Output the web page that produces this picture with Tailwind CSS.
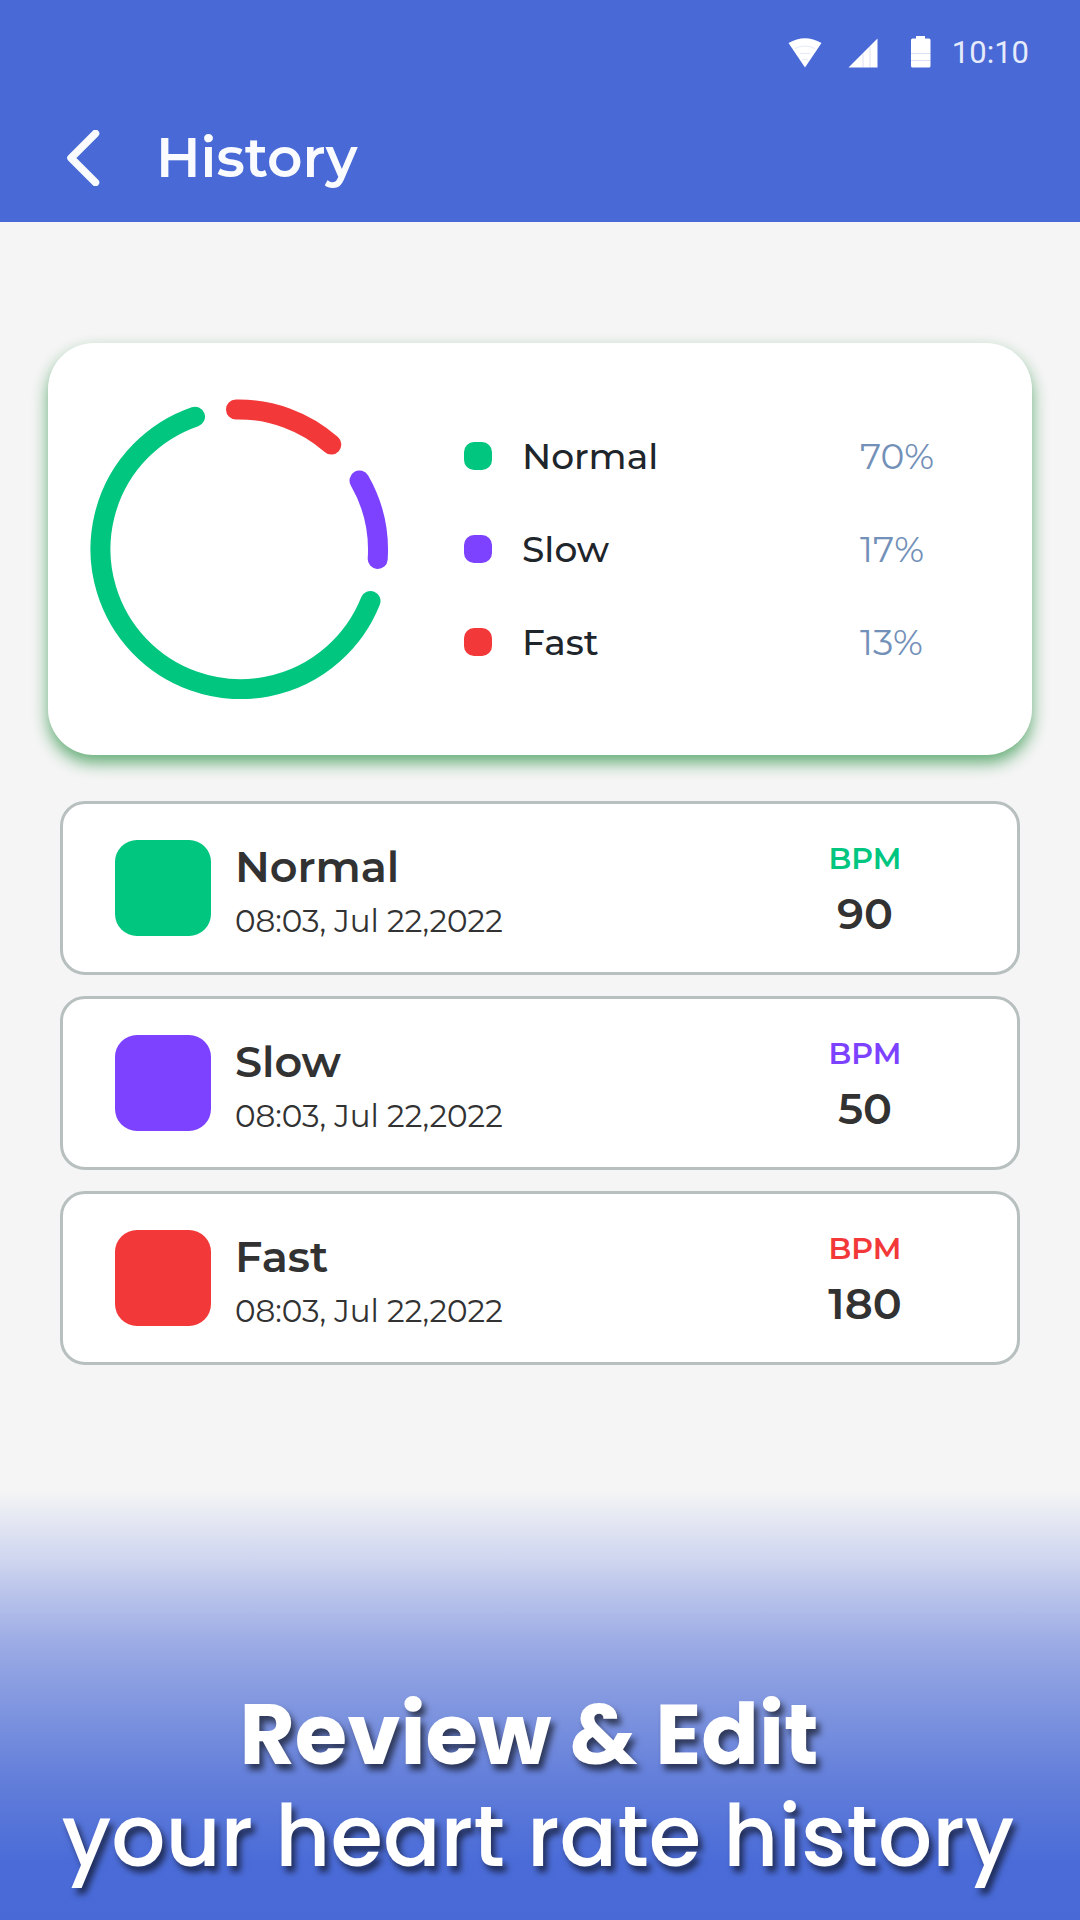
<!DOCTYPE html>
<html lang="en">
<head>
<meta charset="utf-8">
<meta name="viewport" content="width=device-width, initial-scale=1">
<title>History</title>
<script src="https://cdn.jsdelivr.net/npm/@tailwindcss/browser@4"></script>
</head>
<body class="flex min-h-screen flex-col bg-[#f5f5f5] font-['Montserrat','Inter',sans-serif] text-[#323232]">

<header class="bg-[#4869d6] px-[51px] pt-8 pb-9 text-[#fafbfe]">
  <div class="flex h-[42px] items-center justify-end">
    <div class="flex gap-6 text-white">
      <svg class="size-[34px]" viewBox="0 0 34 34" fill="currentColor" aria-label="Wi-Fi"><path d="M0.500 7Q17-2.500 33.500 7L17 31.500z"/><path d="M7 12.500q10-5 20 0M12 17.500h10M14 24q3-1.500 6 0" fill="none" stroke="#4869d6" stroke-opacity=".15"/></svg>
      <svg class="size-[34px]" viewBox="0 0 34 34" fill="currentColor" aria-label="Signal"><path d="M31.500 2.500v29h-29z"/><path d="M17 17.500v14M24 10.500v21" stroke="#4869d6" stroke-opacity=".2"/></svg>
      <svg class="size-[34px]" viewBox="0 0 34 34" fill="currentColor" aria-label="Battery"><path d="M12 2.500V0.500q0-1 1-1h7q1 0 1 1v2h4q1.500 0 1.500 1.500v26q0 1.500-1.500 1.500H8.500Q7 31.500 7 30V4q0-1.500 1.500-1.500z"/><path d="M7 17.500h19.500M7 24.500h19.500" stroke="#4869d6" stroke-opacity=".2"/></svg>
    </div>
    <time class="ml-3.5 font-[Roboto] text-[31px] leading-10 text-[#e6ebfb]">10:10</time>
  </div>
  <div class="mt-14 flex h-14 items-center gap-[41px]">
    <button type="button" aria-label="Back" class="h-14 w-[64px] pl-3.5">
      <svg class="h-14 w-9" viewBox="0 0 36 56" fill="none" stroke="currentColor" stroke-width="7.500" stroke-linecap="round" stroke-linejoin="round"><path d="M30.500 3.500L6 28l24.500 24.500"/></svg>
    </button>
    <h1 class="text-[55px] leading-14 font-semibold">History</h1>
  </div>
</header>

<main class="pt-[121px]">
  <section aria-label="Summary" class="mx-12 flex h-[412px] items-center rounded-[46px] bg-white pl-[42px] shadow-[0_8px_16px_#55a569e6]">
    <svg class="size-[300px] shrink-0" viewBox="0 0 300 300" fill="none" stroke-width="20" stroke-linecap="round" role="img" aria-label="70% normal, 17% slow, 13% fast">
      <path stroke="#00c67f" d="M280.500 202A140 140 0 1 1 105 17.700"/>
      <path stroke="#f23838" d="M146 10.500A139.500 139.500 0 0 1 241.300 45.500"/>
      <path stroke="#7d42ff" d="M269.500 81.500A139.500 139.500 0 0 1 287.700 160"/>
    </svg>
    <ul class="ml-[74px] flex grow flex-col gap-[49px] pr-[78px] text-[36px] leading-11">
      <li class="flex items-center"><span class="size-7 rounded-[10px] bg-[#00c67f]"></span><span class="ml-[30px] grow font-medium text-[#1e252b]">Normal</span><span class="w-[94px] text-[#7390b8]">70%</span></li>
      <li class="flex items-center"><span class="size-7 rounded-[10px] bg-[#7d42ff]"></span><span class="ml-[30px] grow font-medium text-[#1e252b]">Slow</span><span class="w-[94px] text-[#7390b8]">17%</span></li>
      <li class="flex items-center"><span class="size-7 rounded-[10px] bg-[#f23838]"></span><span class="ml-[30px] grow font-medium text-[#1e252b]">Fast</span><span class="w-[94px] text-[#7390b8]">13%</span></li>
    </ul>
  </section>

  <ul class="mx-[60px] mt-[46px] flex flex-col gap-[21px]">
    <li class="flex h-[174px] items-center rounded-[25px] border-3 border-[#b8bfbf] bg-white pl-[52px]">
      <span class="size-24 shrink-0 rounded-[22px] bg-[#00c67f]"></span>
      <div class="ml-6 grow pt-2.5"><h2 class="text-[43px] leading-14 font-semibold">Normal</h2><p class="text-[31px] leading-13">08:03, Jul 22,2022</p></div>
      <div class="mr-[110px] w-[84px] pt-0.5 text-center"><p class="text-[30px] leading-[50px] font-semibold text-[#00c67f]">BPM</p><p class="text-[43px] leading-15 font-semibold">90</p></div>
    </li>
    <li class="flex h-[174px] items-center rounded-[25px] border-3 border-[#b8bfbf] bg-white pl-[52px]">
      <span class="size-24 shrink-0 rounded-[22px] bg-[#7d42ff]"></span>
      <div class="ml-6 grow pt-2.5"><h2 class="text-[43px] leading-14 font-semibold">Slow</h2><p class="text-[31px] leading-13">08:03, Jul 22,2022</p></div>
      <div class="mr-[110px] w-[84px] pt-0.5 text-center"><p class="text-[30px] leading-[50px] font-semibold text-[#7d42ff]">BPM</p><p class="text-[43px] leading-15 font-semibold">50</p></div>
    </li>
    <li class="flex h-[174px] items-center rounded-[25px] border-3 border-[#b8bfbf] bg-white pl-[52px]">
      <span class="size-24 shrink-0 rounded-[22px] bg-[#f23838]"></span>
      <div class="ml-6 grow pt-2.5"><h2 class="text-[43px] leading-14 font-semibold">Fast</h2><p class="text-[31px] leading-13">08:03, Jul 22,2022</p></div>
      <div class="mr-[110px] w-[84px] pt-0.5 text-center"><p class="text-[30px] leading-[50px] font-semibold text-[#f23838]">BPM</p><p class="text-[43px] leading-15 font-semibold">180</p></div>
    </li>
  </ul>
</main>

<footer class="mt-auto bg-[linear-gradient(#f5f5f5,#cfd6ef_16%,#9dace5_35%,#8499e0_48%,#637fda_67%,#4b6cd8_86%,#4869d6)] pt-[194px] pr-1 pb-8 text-center font-['Poppins','Inter',sans-serif] text-[85px] leading-[102px] text-white text-shadow-[4px_6px_6px_rgb(0_0_0/0.6)]">
  <p class="font-bold">Review &amp; Edit&nbsp;</p>
  <p class="font-medium">your heart rate history</p>
</footer>
</body>
</html>
